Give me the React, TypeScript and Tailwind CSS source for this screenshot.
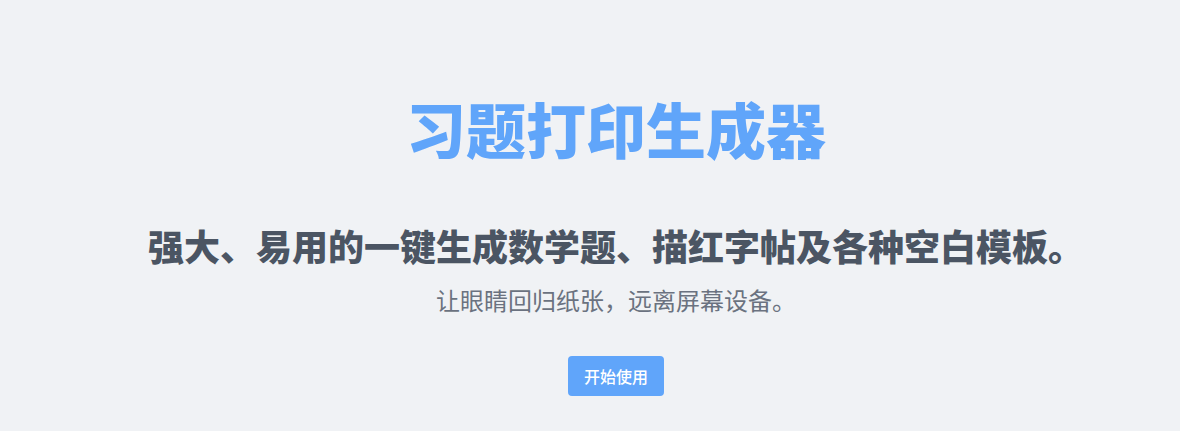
import React from 'react';

const App: React.FC = () => {
  return (
    <div
      className="w-full min-h-screen bg-[#f0f2f5] pt-[98px] pl-[52px]"
      style={{ fontFamily: '"Noto Sans CJK SC", "Noto Sans", sans-serif' }}
    >
      <div className="flex flex-col items-center text-center">
        <h1 className="text-[60px] leading-[60px] font-black text-[#60a5fa]">习题打印生成器</h1>
        <p className="mt-[67px] text-[36px] leading-[40px] font-black text-[#4b5563]">
          强大、易用的一键生成数学题、描红字帖及各种空白模板。
        </p>
        <p className="mt-[19px] text-[24px] leading-[32px] text-[#6b7280]">让眼睛回归纸张，远离屏幕设备。</p>
        <button className="mt-[40px] h-[40px] px-4 rounded bg-[#60a5fa] text-white text-base font-medium">
          开始使用
        </button>
      </div>
    </div>
  );
};

export default App;
